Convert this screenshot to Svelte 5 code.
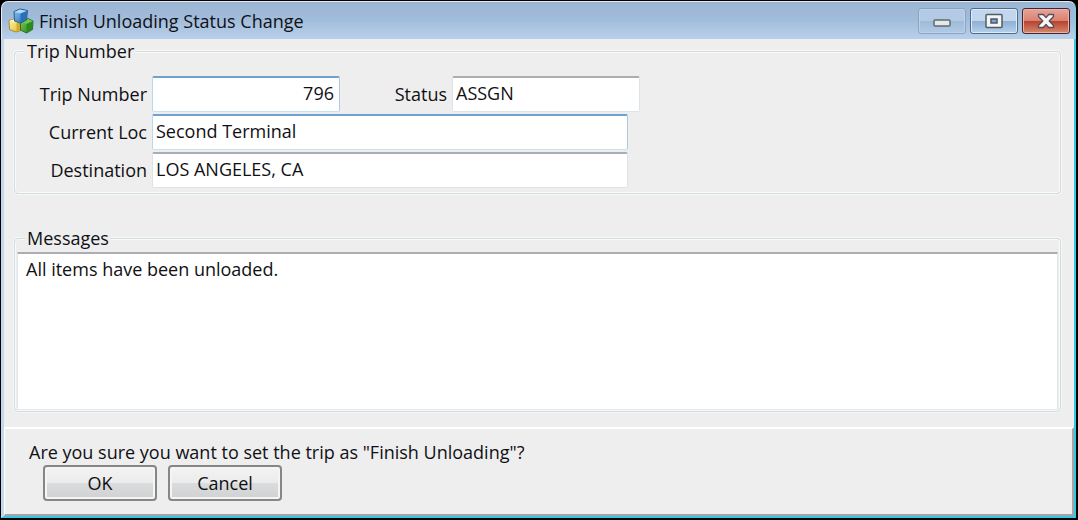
<script>
  let trip = $state('796');
  let status = $state('ASSGN');
  let location = $state('Second Terminal');
  let destination = $state('LOS ANGELES, CA');
  let messages = $state('All items have been unloaded.');
</script>

<main class="window">
  <header class="titlebar">
    <svg class="app-icon" width="26" height="26" viewBox="0 0 26 26" aria-hidden="true">
      <defs>
        <linearGradient id="blue" x1="0" y1="0" x2="1" y2="1">
          <stop offset="0" stop-color="#8cc8f2" />
          <stop offset="1" stop-color="#2466b0" />
        </linearGradient>
        <linearGradient id="yellow" x1="0" y1="0" x2="1" y2="1">
          <stop offset="0" stop-color="#fff7a8" />
          <stop offset="1" stop-color="#e2b72e" />
        </linearGradient>
        <linearGradient id="green" x1="0" y1="0" x2="1" y2="1">
          <stop offset="0" stop-color="#7ccb52" />
          <stop offset="1" stop-color="#27821c" />
        </linearGradient>
      </defs>
      <path d="M1 12.5 6 11l7 1.500V22.500L8 24l-6.500-2.500z" fill="url(#yellow)" stroke="#a88a35" />
      <path d="M1.500 12.500 6 11.500l6.500 1.500-4 1.500z" fill="#fff9cf" />
      <path d="M8.500 15V23.500l4.500-2V13z" fill="#d3a92b" />
      <path d="M12.500 13.500 20 10.500l5 2.500-.5 8.500-6 3.500-6-3z" fill="url(#green)" stroke="#2b7420" />
      <path d="M13.500 13.500 20 11l4.500 2-6 3z" fill="#74c653" />
      <path d="M18.500 16V24.500l5.500-3.500.5-7.500z" fill="#2c8a20" />
      <path d="M6 3.500 12 1l7.500 1.500-1 9.500-6 3L6.500 13z" fill="url(#blue)" stroke="#275b91" />
      <path d="M6.500 4 12.500 5.500 19 3 12 1.500z" fill="#a9dcf8" />
      <path d="M12.500 5.500V14.500l5.500-3 1-8.500z" fill="#2c6fb8" />
    </svg>
    <h1>Finish Unloading Status Change</h1>
    <div class="controls">
      <button class="control minimize" type="button" aria-label="Minimize">
        <svg width="18" height="16" viewBox="0 0 18 16"><rect x="1" y="7" width="16" height="6" rx="1" fill="#e6e8e4" stroke="#5f6972" stroke-width="1.5" /></svg>
      </button>
      <button class="control" type="button" aria-label="Maximize">
        <svg width="18" height="16" viewBox="0 0 18 16"><rect x="1" y="1.5" width="16" height="13" rx="1" fill="#f3f4f4" stroke="#535c66" stroke-width="1.5" /><rect x="6" y="6" width="6" height="4" fill="#7fa6cc" stroke="#4b5867" stroke-width="1.5" /></svg>
      </button>
      <button class="control close" type="button" aria-label="Close">
        <svg width="18" height="16" viewBox="0 0 18 16"><path d="M1.5 1.5h4.800L9 4.600l2.700-3.100h4.800v2L12.200 8l4.300 4.500v2h-4.800L9 11.400l-2.700 3.100H1.500v-2L5.800 8 1.500 3.500z" fill="#f7f7f7" stroke="#5b4c55" stroke-width="1.3" stroke-linejoin="round" /></svg>
      </button>
    </div>
  </header>

  <form class="client" onsubmit={(e) => e.preventDefault()}>
    <div class="body">
      <fieldset class="trip">
        <legend>Trip Number</legend>
        <div class="fields">
          <label for="trip">Trip Number</label>
          <div class="pair">
            <input id="trip" class="short number active" bind:value={trip} />
            <label class="status" for="status">Status</label>
            <input id="status" class="short" bind:value={status} />
          </div>
          <label for="location">Current Loc</label>
          <input id="location" class="long active" bind:value={location} />
          <label for="destination">Destination</label>
          <input id="destination" class="long" bind:value={destination} />
        </div>
      </fieldset>
      <fieldset class="messages">
        <legend>Messages</legend>
        <textarea aria-label="Messages" bind:value={messages}></textarea>
      </fieldset>
    </div>
    <footer>
      <p>Are you sure you want to set the trip as "Finish Unloading"?</p>
      <div class="actions">
        <button class="push" type="submit">OK</button>
        <button class="push" type="button">Cancel</button>
      </div>
    </footer>
  </form>
</main>

<style>
  :global(body) {
    background: #000;
  }
  * {
    box-sizing: border-box;
  }
  .window,
  button,
  input,
  textarea {
    font-family: "Open Sans", "Noto Sans", sans-serif;
    font-size: 18px;
    line-height: 24px;
    color: #101014;
  }
  .window {
    display: flex;
    flex-direction: column;
    min-height: 100vh;
    padding: 1px 2px 2px 1px;
    background: #000;
  }
  .titlebar {
    display: flex;
    align-items: center;
    height: 38px;
    padding: 0 5px 0 6px;
    border: 1px solid #e2edf8;
    border-bottom: 0;
    border-right-color: #6fd6ea;
    border-radius: 7px 7px 0 0;
    background: linear-gradient(#9bb6d3, #a2bddb 50%, #b9d0ea);
  }
  .app-icon {
    flex: none;
    margin-right: 5px;
  }
  h1 {
    flex: 1;
    margin: 0;
    font-size: 18px;
    font-weight: 400;
    white-space: nowrap;
  }
  .controls {
    display: flex;
    gap: 4px;
  }
  .control {
    display: flex;
    align-items: center;
    justify-content: center;
    width: 48px;
    height: 26px;
    padding: 0;
    border: 1px solid #506a8c;
    border-radius: 3px;
    background: linear-gradient(#c2d7ee 50%, #8eafd1 50%, #b4d0ec);
    box-shadow: inset 0 0 0 1px #dfebf7;
  }
  .minimize {
    border-color: #8ba4c1;
    background: linear-gradient(#b2cae4 50%, #9ebad8 50%, #b0cae6);
    box-shadow: inset 0 0 0 1px #bdd2e9;
  }
  .close {
    border-color: #4d2030;
    background: linear-gradient(#e5a598, #d98170 50%, #b7412c 50%, #d58a70);
    box-shadow: inset 0 0 0 1px #eab5a9;
  }
  .client {
    flex: 1;
    display: flex;
    flex-direction: column;
    border: solid;
    border-width: 0 2px 2px 3px;
    border-color: #b5d0ec #35c7e3 #35c7e3 #c3d7ee;
    background: #eee;
  }
  .body {
    flex: 1;
    display: flex;
    flex-direction: column;
    gap: 32px;
    padding: 0 13px 15px 10px;
  }
  fieldset {
    min-width: 0;
    margin: 0;
    border: 1px solid #d0dbe2;
    border-radius: 4px;
    box-shadow: inset 0 0 0 1px #fafafa, 0 0 0 1px #f7f7f7;
  }
  legend {
    padding: 0 2px;
    margin-left: 10px;
    background: #eee;
  }
  .trip {
    padding: 13px 0 5px;
  }
  .fields {
    display: grid;
    grid-template-columns: 132px minmax(0, 1fr);
    column-gap: 5px;
    row-gap: 2px;
    align-items: center;
  }
  .fields label {
    text-align: right;
    white-space: nowrap;
  }
  .pair {
    display: flex;
    align-items: center;
  }
  .fields .status {
    width: 107px;
    margin-right: 5px;
  }
  input {
    height: 36px;
    padding: 0 3px 3px;
    border: 1px solid #dde4e9;
    border-top: 2px solid #abadb3;
    border-radius: 2px;
    background: #fff;
  }
  .active {
    border-color: #6fa2cf #a9cbe6 #c7e2f1 #b7d9ed;
  }
  .short {
    width: 188px;
  }
  .long {
    width: 476px;
    max-width: 100%;
  }
  .number {
    padding-right: 5px;
    text-align: right;
  }
  .messages {
    flex: 1;
    display: flex;
    flex-direction: column;
    padding: 2px 2px 0;
  }
  .messages legend {
    margin-left: 8px;
  }
  textarea {
    flex: 1;
    display: block;
    width: 100%;
    min-height: 158px;
    padding: 3px 8px;
    border: 1px solid #e1e7ea;
    border-top: 2px solid #abadb3;
    resize: none;
    background: #fff;
  }
  input:focus,
  textarea:focus {
    outline: none;
  }
  footer {
    padding: 11px 24px 13px;
    border: solid;
    border-width: 2px 2px 2px 1px;
    border-color: #fff #a5a5a5 #a5a5a5 #fff;
  }
  p {
    margin: 0;
  }
  .actions {
    display: flex;
    gap: 11px;
    margin: 1px 14px 0;
  }
  .push {
    width: 114px;
    height: 36px;
    padding: 0;
    border: 2px solid #868686;
    border-radius: 4px;
    background: linear-gradient(#f3f3f3, #ebebeb 50%, #dadcde 50%, #cfd1d3);
    box-shadow: inset 0 0 0 2px #f5f5f5;
  }
</style>
